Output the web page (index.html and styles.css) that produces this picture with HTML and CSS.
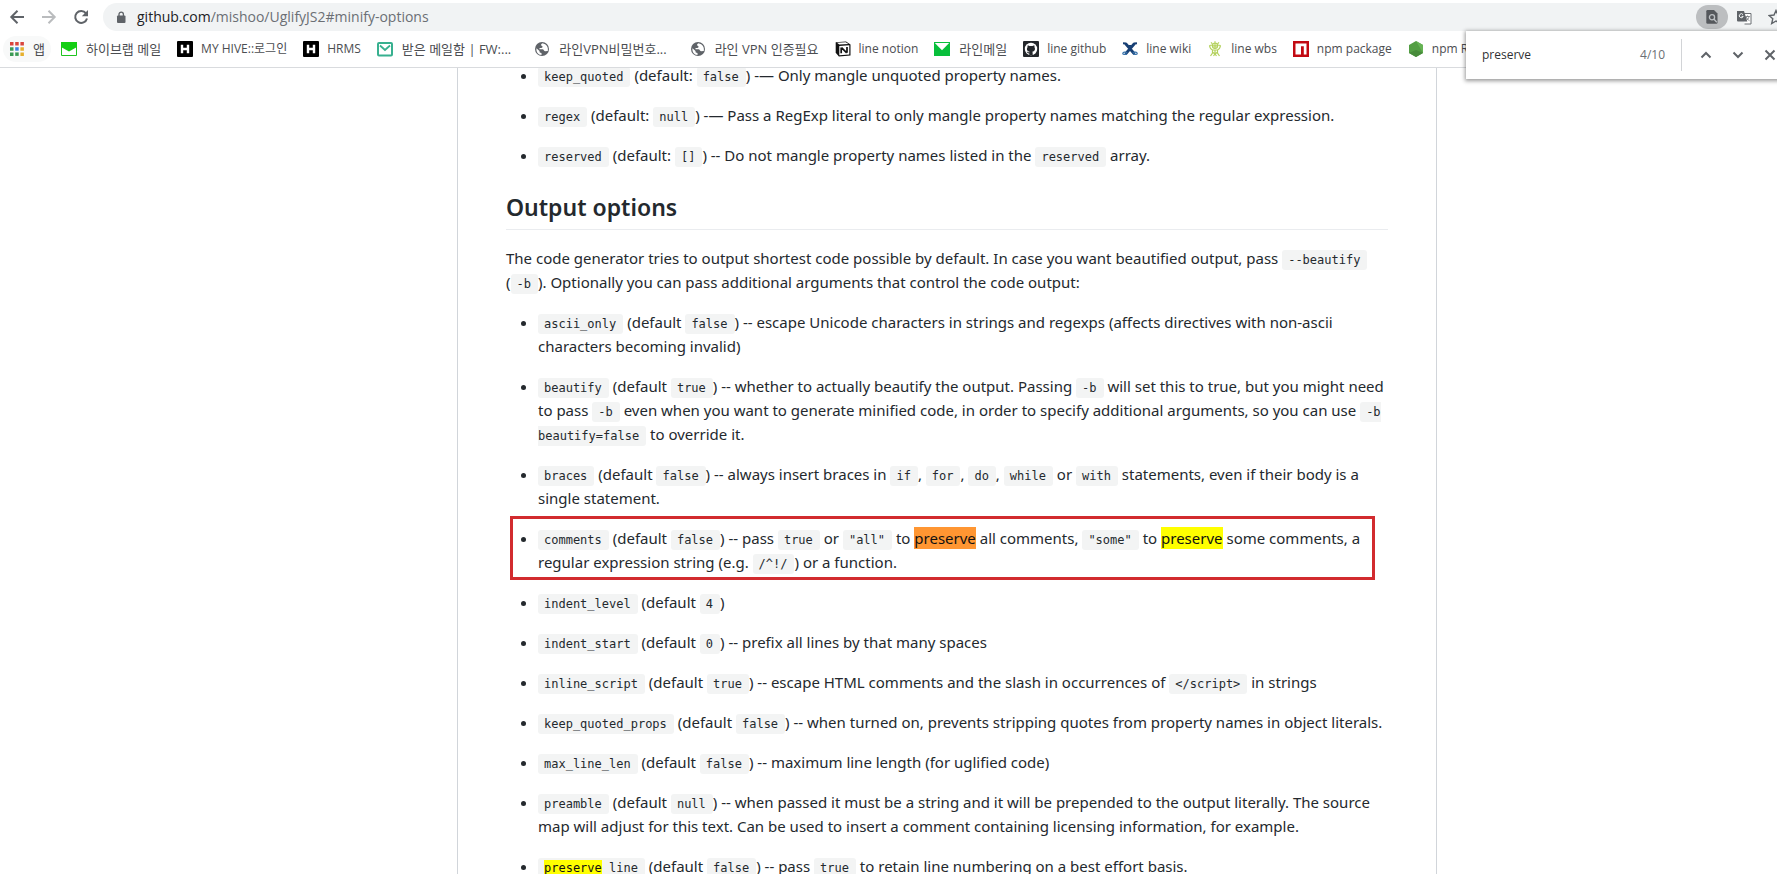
FILE: index.html
```html
<!DOCTYPE html>
<html lang="en">
<head>
<meta charset="utf-8">
<title>mishoo/UglifyJS2</title>
<link rel="stylesheet" href="styles.css">
</head>
<body>
<header class="chrome">
  <div class="toolbar">
    <button class="nav" aria-label="Back"><svg width="16" height="16" viewBox="0 0 16 16" fill="none" stroke="#5f6368" stroke-width="2"><path d="M15 8H2.500M8.500 1.800L2.300 8l6.200 6.200"/></svg></button>
    <button class="nav" aria-label="Forward" disabled><svg width="16" height="16" viewBox="0 0 16 16" fill="none" stroke="#babcbe" stroke-width="2"><path d="M1 8h12.500M7.500 1.800L13.700 8l-6.200 6.200"/></svg></button>
    <button class="nav" aria-label="Reload"><svg width="16" height="16" viewBox="0 0 16 16"><path d="M13 4.300A6 6 0 1 0 14 9.500" fill="none" stroke="#5f6368" stroke-width="2"/><path d="M15 1v6.200H8.800z" fill="#5f6368"/></svg></button>
    <div class="omnibox">
      <svg class="lock" width="10" height="13" viewBox="0 0 10 13"><rect x="1" y="4.500" width="8.500" height="7.500" rx="1" fill="#5f6368"/><path d="M3 5V3.300a2.200 2.200 0 0 1 4.400 0V5" fill="none" stroke="#5f6368" stroke-width="1.300"/></svg>
      <a class="url" href="#minify-options"><span class="host">github.com</span>/mishoo/UglifyJS2#minify-options</a>
      <button class="pill" aria-label="Find in page"><svg width="12" height="14" viewBox="0 0 12 14"><path d="M1.500 0H8l3.500 3.500v9a1.200 1.200 0 0 1-1.200 1.200H1.500A1.200 1.200 0 0 1 .3 12.500v-11.300A1.200 1.200 0 0 1 1.500 0z" fill="#55585c"/><circle cx="6" cy="7.200" r="2.600" fill="none" stroke="#bdc0c3" stroke-width="1.300"/><path d="M7.800 9l3 3.200" stroke="#bdc0c3" stroke-width="1.300"/></svg></button>
      <button class="omni-btn" aria-label="Translate"><svg width="15" height="15" viewBox="0 0 15 15"><path d="M5.500 3.500H14v10.500H7.500" fill="#fff" stroke="#6b6e73"/><path d="M0 1h7l3.300 10.500H1A1 1 0 0 1 0 10.500z" fill="#5f6368"/><path d="M6 4.700A2 2 0 1 0 6.200 6.400H4.600" fill="none" stroke="#f1f3f4"/><path d="M8.300 6.500h4.500M10.500 5.500v1M12 6.500c-.3 1.800-1.300 3-2.600 4M9.200 7c.6 1.600 1.800 2.800 3.300 3.700" fill="none" stroke="#6b6e73" stroke-width=".8"/></svg></button>
      <button class="omni-btn star" aria-label="Bookmark this page"><svg width="16" height="16" viewBox="0 0 16 16"><path d="M8 1.500l2 4.500 4.900.5-3.700 3.200 1.100 4.800L8 12l-4.300 2.500 1.100-4.800L1.100 6.500 6 6z" fill="none" stroke="#5f6368" stroke-width="1.400"/></svg></button>
    </div>
  </div>
  <nav class="bookmarks" aria-label="Bookmarks">
    <a class="bm ko apps" href="#"><svg width="14" height="14" viewBox="0 0 14 14"><path fill="#d9453d" d="M0 0h3.500v3.500H0zM5.200 0h3.500v3.500H5.200zM10.400 0h3.500v3.500h-3.500z"/><path fill="#3b9a55" d="M0 5.200h3.500v3.500H0zM0 10.400h3.500v3.500H0z"/><path fill="#3b82e0" d="M5.200 5.200h3.500v3.500H5.200z"/><path fill="#e6b02e" d="M10.400 5.200h3.500v3.500h-3.500zM10.400 10.400h3.500v3.500h-3.500z"/><path fill="#3b9a55" d="M5.200 10.400h3.500v3.500H5.200z"/></svg><span>앱</span></a>
    <a class="bm ko" href="#"><svg width="16" height="16" viewBox="0 0 16 16"><path fill="#fff" stroke="#1fc41f" d="M.5 1.500h15v13H.5z"/><path fill="#13cf13" d="M0 1h16v5L8 10.500 0 6z"/></svg><span>하이브랩 메일</span></a>
    <a class="bm" href="#"><svg width="16" height="16" viewBox="0 0 16 16"><rect width="16" height="16" rx="1"/><path stroke="#fff" stroke-width="2.400" d="M5 3.700v8.600M11 3.700v8.600M5 8h6"/></svg><span>MY HIVE::로그인</span></a>
    <a class="bm" href="#"><svg width="16" height="16" viewBox="0 0 16 16"><rect width="16" height="16" rx="1"/><path stroke="#fff" stroke-width="2.400" d="M5 3.700v8.600M11 3.700v8.600M5 8h6"/></svg><span>HRMS</span></a>
    <a class="bm ko" href="#"><svg width="16" height="16" viewBox="0 0 16 16"><rect x="1" y="2" width="14" height="12.500" rx="1" fill="#fff" stroke="#37b08f" stroke-width="2"/><path d="M3 4.500l5 4.500 5-4.500" fill="none" stroke="#37b08f" stroke-width="1.800"/></svg><span>받은 메일함 | FW:...</span></a>
    <a class="bm globe ko" href="#"><svg width="16" height="16" viewBox="0 0 16 16"><circle cx="8" cy="8" r="7" fill="#5f6368"/><path d="M8.500 2.200C6.500 3 6.800 4.500 8 5c1.300.4.300 2-.8 2.100H5.500v1.200h3c1.500 0 1.200 1.700 2.500 1.900l2.800-.3C14.500 6 12.500 3 8.500 2.200zM2.500 7.200l3 2.800.2 1.500 1.800.4v2C4.500 14 1.800 11 2.500 7.200z" fill="#fff"/></svg><span>라인VPN비밀번호...</span></a>
    <a class="bm globe ko" href="#"><svg width="16" height="16" viewBox="0 0 16 16"><circle cx="8" cy="8" r="7" fill="#5f6368"/><path d="M8.500 2.200C6.500 3 6.800 4.500 8 5c1.300.4.300 2-.8 2.100H5.500v1.200h3c1.500 0 1.200 1.700 2.500 1.900l2.800-.3C14.500 6 12.500 3 8.500 2.200zM2.500 7.200l3 2.800.2 1.500 1.800.4v2C4.500 14 1.800 11 2.500 7.200z" fill="#fff"/></svg><span>라인 VPN 인증필요</span></a>
    <a class="bm" href="#"><svg width="16" height="16" viewBox="0 0 16 16"><path d="M.7 1.200L11 .4l4.500 3v11l-11.600 1.100L.7 11.800z" fill="#111"/><path d="M2 1.800l8.700-.6L13.500 3 4.300 3.600z" fill="#fff"/><path d="M4.300 5l10-.7v9.300l-10 .7z" fill="#fff"/><path d="M6.200 12.300V6.600M12 11.800V6M6.500 6.700l5.200 5.200" stroke="#111" stroke-width="1.700"/></svg><span>line notion</span></a>
    <a class="bm ko" href="#"><svg width="16" height="16" viewBox="0 0 16 16"><path fill="#08bf3b" d="M0 1h16v14H0z"/><path fill="#fff" d="M.8 2h14.400L8 9.300z"/></svg><span>라인메일</span></a>
    <a class="bm" href="#"><svg width="16" height="16" viewBox="0 0 16 16"><rect width="16" height="16" rx="1" fill="#24272b"/><circle cx="8" cy="8" r="6.200" fill="#fff"/><path d="M4.800 4.200l1.700.8h3l1.700-.8c.5 1 .3 1.600.3 2 1.200 2.200 0 4.200-2.200 4.500.4.500.4 1 .4 3.400H6.300v-1.700c-1.500.2-1.800-.9-2.500-1.500.9-.2 1.300.7 2.500.7 0-.5 0-.6.4-.9C4.300 10.500 3.200 8.500 4.500 6.200c0-.6-.1-1.200.3-2z" fill="#24272b"/></svg><span>line github</span></a>
    <a class="bm" href="#"><svg width="16" height="16" viewBox="0 0 16 16" fill="none" stroke="#173f74"><path d="M3.500 2.500l9 10.500M12.500 2.500L3.500 13" stroke-width="2.800"/><path d="M1 2.300l3 .2M15 2.300l-3 .2" stroke-width="2"/><path d="M5.300 11.500c-2-.8-4.200-.5-4.500.8s2 1.600 4 .4M10.700 11.500c2-.8 4.200-.5 4.500.8s-2 1.600-4 .4" stroke="#3973ab" stroke-width="1.200"/><path d="M7 4.500h2L8 5.600z" fill="#173f74"/></svg><span>line wiki</span></a>
    <a class="bm" href="#"><svg width="16" height="16" viewBox="0 0 16 16" fill="none" stroke="#b3d15b" stroke-width="1.200"><circle cx="8" cy="4.800" r="2.600"/><path d="M8 .3v1.500M4 1.300l1.500 1.500M12 1.300l-1.500 1.500M2.500 4.500c.4 2.800 1.300 4 3 4.500v3l-2 3M13.500 4.500c-.4 2.800-1.300 4-3 4.500v3l2 3M5.500 9h5M6 11.500l2 1.500 2-1.500M8 9v4M6.500 15L8 13l1.500 2M2.500 4.500l3-.5M13.500 4.500l-3-.5M6 4.800h4M8 2.500v5"/></svg><span>line wbs</span></a>
    <a class="bm" href="#"><svg width="16" height="16" viewBox="0 0 16 16"><path fill="#c20a13" d="M0 0h16v16H0z"/><path fill="#fff" d="M2.500 2.500h11v11h-2.700V5.300H8v8.200H2.500z"/></svg><span>npm package</span></a>
    <a class="bm" href="#"><svg width="16" height="16" viewBox="0 0 16 16"><path d="M8 0l7 4v8l-7 4-7-4V4z" fill="#539e43"/><path d="M8 0l7 4v8L8 0z" fill="#66b354"/><path d="M1 12l7 4 7-4-7-3z" fill="#478b3b"/></svg><span>npm Registry</span></a>
  </nav>
  <form class="find" role="search">
    <input class="find-text" type="text" value="preserve" aria-label="Find in page">
    <span class="count">4/10</span>
    <span class="rule"></span>
    <button class="find-btn" type="button" aria-label="Previous"><svg width="12" height="12" viewBox="0 0 12 12" fill="none" stroke="#5f6368" stroke-width="2"><path d="M1.500 8.500L6 4l4.500 4.500"/></svg></button>
    <button class="find-btn" type="button" aria-label="Next"><svg width="12" height="12" viewBox="0 0 12 12" fill="none" stroke="#5f6368" stroke-width="2"><path d="M1.500 3.500L6 8l4.500-4.500"/></svg></button>
    <button class="find-btn" type="button" aria-label="Close"><svg width="12" height="12" viewBox="0 0 12 12" fill="none" stroke="#5f6368" stroke-width="2"><path d="M1.500 1.500l9 9M10.500 1.500l-9 9"/></svg></button>
  </form>
</header>
<main class="page">
  <article class="readme">
    <ul>
      <li><code>keep_quoted</code> (default: <code>false</code>) -— Only mangle unquoted property names.</li>
      <li><code>regex</code> (default: <code>null</code>) -— Pass a RegExp literal to only mangle property names matching the regular expression.</li>
      <li><code>reserved</code> (default: <code>[]</code>) -- Do not mangle property names listed in the <code>reserved</code> array.</li>
    </ul>
    <h2>Output options</h2>
    <p>The code generator tries to output shortest code possible by default. In case you want beautified output, pass <code>--beautify</code> <span class="keep">(<code>-b</code>).</span> Optionally you can pass additional arguments that control the code output:</p>
    <ul>
      <li><code>ascii_only</code> (default <code>false</code>) -- escape Unicode characters in strings and regexps (affects directives with non-ascii characters becoming invalid)</li>
      <li><code>beautify</code> (default <code>true</code>) -- whether to actually beautify the output. Passing <code>-b</code> will set this to true, but you might need to pass <code>-b</code> even when you want to generate minified code, in order to specify additional arguments, so you can use <code>-b beautify=false</code> to override it.</li>
      <li><code>braces</code> (default <code>false</code>) -- always insert braces in <code>if</code>, <code>for</code>, <code>do</code>, <code>while</code> or <code>with</code> statements, even if their body is a single statement.</li>
      <li class="boxed"><code>comments</code> (default <code>false</code>) -- pass <code>true</code> or <code>"all"</code> to <mark class="current">preserve</mark> all comments, <code>"some"</code> to <mark>preserve</mark> some comments, a regular expression string (e.g. <code>/^!/</code>) or a function.</li>
      <li><code>indent_level</code> (default <code>4</code>)</li>
      <li><code>indent_start</code> (default <code>0</code>) -- prefix all lines by that many spaces</li>
      <li><code>inline_script</code> (default <code>true</code>) -- escape HTML comments and the slash in occurrences of <code>&lt;/script&gt;</code> in strings</li>
      <li><code>keep_quoted_props</code> (default <code>false</code>) -- when turned on, prevents stripping quotes from property names in object literals.</li>
      <li><code>max_line_len</code> (default <code>false</code>) -- maximum line length (for uglified code)</li>
      <li><code>preamble</code> (default <code>null</code>) -- when passed it must be a string and it will be prepended to the output literally. The source map will adjust for this text. Can be used to insert a comment containing licensing information, for example.</li>
      <li><code><mark>preserve</mark>_line</code> (default <code>false</code>) -- pass <code>true</code> to retain line numbering on a best effort basis.</li>
    </ul>
  </article>
</main>
</body>
</html>
```
FILE: styles.css
```css
* { box-sizing: border-box; }
body {
  margin: 0;
  height: 100vh;
  display: flex;
  flex-direction: column;
  overflow: hidden;
  background: #fff;
  color: #24292e;
  font: 15px/24px "Noto Sans", "Noto Sans CJK KR", sans-serif;
}
button { border: 0; padding: 0; background: none; display: flex; align-items: center; justify-content: center; flex: none; }
a { color: inherit; text-decoration: none; }
svg { display: block; flex: none; }

.chrome { position: relative; flex: none; border-bottom: 1px solid #d9dbde; font-family: "Open Sans", "Noto Sans CJK KR", sans-serif; }
.toolbar { display: flex; align-items: center; padding: 3px 0 0 1px; }
.nav { width: 32px; height: 28px; }
.nav:nth-child(3) { width: 38px; padding-right: 6px; }
.omnibox {
  flex: 1;
  min-width: 0;
  height: 28px;
  display: flex;
  align-items: center;
  padding-left: 13px;
  border-radius: 14px 0 0 14px;
  background: #f1f3f4;
  overflow: hidden;
}
.lock { margin-right: 11px; }
.url { flex: 1; min-width: 0; white-space: nowrap; color: #6b6f74; font-size: 14px; }
.host { color: #202124; }
.pill { width: 32px; height: 24px; border-radius: 12px; background: #bcbec0; }
.omni-btn { width: 32px; height: 24px; }
.star { width: 17px; justify-content: flex-start; padding-left: 8px; overflow: hidden; }

.bookmarks { display: flex; align-items: center; gap: 16px; height: 36px; padding: 0 0 0 3px; overflow: hidden; white-space: nowrap; font-size: 12px; line-height: 18px; color: #4b4d51; }
.bm { display: flex; align-items: center; gap: 8px; flex: none; }
.ko { gap: 9px; font-size: 13px; }
.apps { height: 26px; padding: 0 6px 0 7px; margin-right: -6px; border-radius: 13px; background: #f8f9f9; }
.globe { padding-left: 7px; }

.find {
  position: absolute;
  z-index: 2;
  top: 31px;
  right: -9px;
  width: 320px;
  height: 48px;
  display: flex;
  align-items: center;
  padding-left: 16px;
  background: #fff;
  box-shadow: 0 1px 4px 1px rgba(0, 0, 0, .4);
}
.find-text { flex: 1; min-width: 0; border: 0; padding: 0; outline: 0; background: none; color: #303134; font: 12px/18px "Open Sans", sans-serif; }
.count { font-size: 12px; line-height: 18px; color: #6b6f74; }
.rule { width: 1px; height: 32px; margin: 0 8px 0 16px; background: #d2d4d7; }
.find-btn { width: 32px; height: 32px; }

.page { flex: 1; min-height: 0; overflow: hidden; display: grid; grid-template-columns: 457fr 980fr 340fr; }
.readme { grid-column: 2; margin-top: -5px; padding: 0 48px; border: solid #d1d5da; border-width: 0 1px; }
.readme ul { margin: 0 0 16px; padding-left: 32px; }
.readme li { position: relative; }
.readme li + li { margin-top: 16px; }
.readme p { margin: 0 0 16px; }
.readme h2 { margin: 25px 0 16px; padding-bottom: 7px; border-bottom: 1px solid #eaecef; font-size: 23px; line-height: 30px; font-weight: 600; }
.readme code { padding: 3px 7px 3px 6px; border-radius: 3px; background: #f3f4f4; font: 12px/18px "DejaVu Sans Mono", monospace; }
.keep { white-space: nowrap; }
mark { background: #ff0; color: #111; padding: 1px 0; }
mark.current { background: #ff9632; }
.boxed::after { content: ""; position: absolute; inset: -10px 13px -6px -28px; border: 3px solid #d22b2f; }
```
